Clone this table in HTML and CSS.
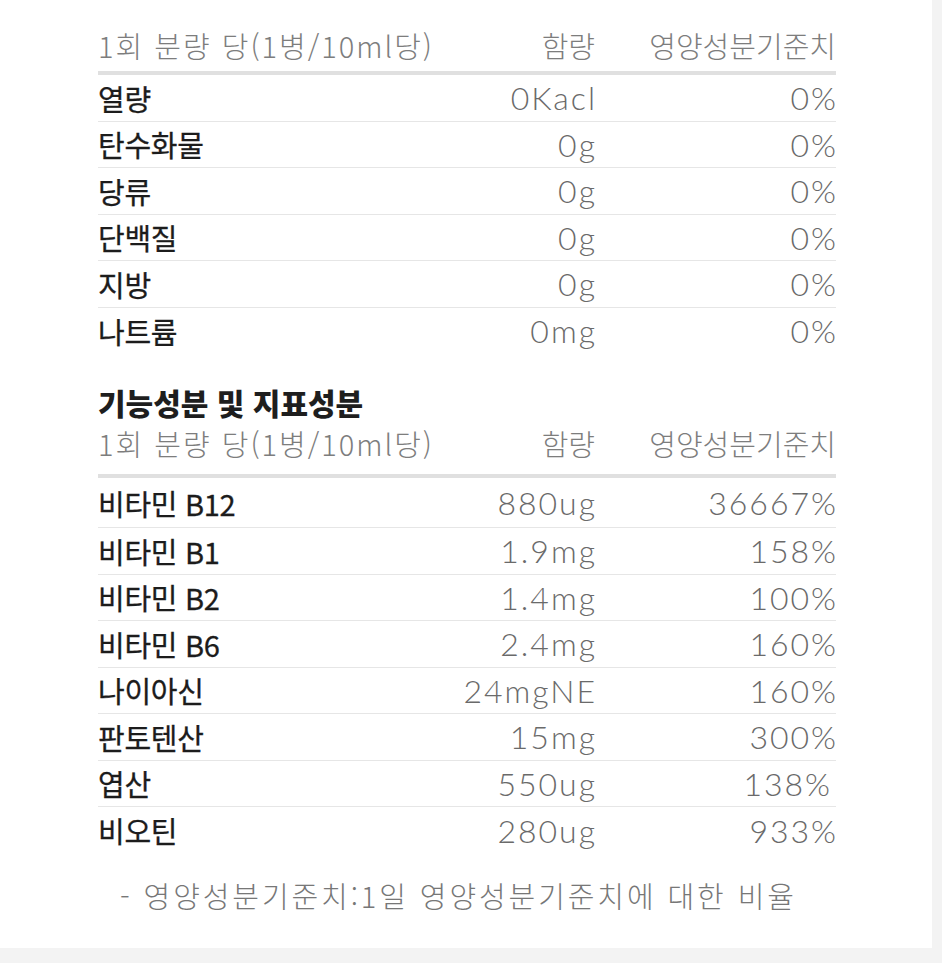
FILE: index.html
```html
<!DOCTYPE html>
<html lang="ko">
<head>
<meta charset="utf-8">
<link rel="stylesheet" href="styles.css">
</head>
<body>
<div class="sheet">
  <section class="block first">
    <div class="row head">
      <span class="c1">1회 분량 당(1병/10ml당)</span>
      <span class="c2">함량</span>
      <span class="c3">영양성분기준치</span>
    </div>
    <div class="row"><span class="c1">열량</span><span class="c2 num">0Kacl</span><span class="c3 num">0%</span></div>
    <div class="row"><span class="c1">탄수화물</span><span class="c2 num">0g</span><span class="c3 num">0%</span></div>
    <div class="row"><span class="c1">당류</span><span class="c2 num">0g</span><span class="c3 num">0%</span></div>
    <div class="row"><span class="c1">단백질</span><span class="c2 num">0g</span><span class="c3 num">0%</span></div>
    <div class="row"><span class="c1">지방</span><span class="c2 num">0g</span><span class="c3 num">0%</span></div>
    <div class="row"><span class="c1">나트륨</span><span class="c2 num">0mg</span><span class="c3 num">0%</span></div>
  </section>

  <section class="block second">
    <h2 class="title">기능성분 및 지표성분</h2>
    <div class="row head">
      <span class="c1">1회 분량 당(1병/10ml당)</span>
      <span class="c2">함량</span>
      <span class="c3">영양성분기준치</span>
    </div>
    <div class="row lead"><span class="c1">비타민 B12</span><span class="c2 num">880ug</span><span class="c3 num">36667%</span></div>
    <div class="row"><span class="c1">비타민 B1</span><span class="c2 num">1.9mg</span><span class="c3 num">158%</span></div>
    <div class="row"><span class="c1">비타민 B2</span><span class="c2 num">1.4mg</span><span class="c3 num">100%</span></div>
    <div class="row"><span class="c1">비타민 B6</span><span class="c2 num">2.4mg</span><span class="c3 num">160%</span></div>
    <div class="row"><span class="c1">나이아신</span><span class="c2 num">24mgNE</span><span class="c3 num">160%</span></div>
    <div class="row"><span class="c1">판토텐산</span><span class="c2 num">15mg</span><span class="c3 num">300%</span></div>
    <div class="row"><span class="c1">엽산</span><span class="c2 num">550ug</span><span class="c3 num pad">138%</span></div>
    <div class="row"><span class="c1">비오틴</span><span class="c2 num">280ug</span><span class="c3 num">933%</span></div>
  </section>

  <p class="note">- 영양성분기준치:1일 영양성분기준치에 대한 비율</p>
</div>
</body>
</html>
```

FILE: styles.css
```css
html, body {
  margin: 0;
  padding: 0;
}
body {
  background: #f3f3f3;
  font-family: "Noto Sans CJK KR", "Noto Sans", sans-serif;
}
.sheet {
  width: 932px;
  height: 948px;
  background: #ffffff;
  box-sizing: border-box;
  padding: 24px 0 0 98px;
}
.block {
  width: 738px;
}
.row {
  display: grid;
  grid-template-columns: 337px 160px 241px;
  align-items: center;
  height: 46.5px;
  border-bottom: 1px solid #e6e6e6;
  box-sizing: border-box;
}
.row:last-child {
  border-bottom: none;
}
.row.lead {
  height: 50px;
}
.row.head {
  height: 51px;
  border-bottom: 4px solid #e0e0e0;
  color: #7d7d7d;
  font-size: 29px;
  font-weight: 300;
  align-items: start;
}
.c1 {
  font-size: 29px;
  font-weight: 400;
  color: #1c1c1c;
  letter-spacing: -0.3px;
  white-space: nowrap;
  -webkit-text-stroke: 0.3px #1c1c1c;
}
.head .c1 {
  font-size: 29px;
  font-weight: 300;
  color: #7d7d7d;
  letter-spacing: 2px;
  -webkit-text-stroke: 0;
}
.c2, .c3 {
  text-align: right;
  white-space: nowrap;
}
.num {
  font-family: "Lato", "Roboto", sans-serif;
  font-weight: 300;
  font-size: 32px;
  letter-spacing: 2px;
  margin-right: -2px;
  color: #6a6a6a;
  -webkit-text-stroke: 0;
}
.num.pad {
  margin-right: 4px;
}
.second {
  margin-top: 28px;
}
.title {
  margin: 0;
  font-size: 30px;
  font-weight: 900;
  color: #1e1e1e;
  line-height: 40px;
  letter-spacing: 0;
}
.second .row.head {
  height: 56px;
}
.note {
  margin: 20px 0 0 22px;
  font-size: 29px;
  font-weight: 300;
  color: #777777;
  letter-spacing: 2.9px;
}
```
